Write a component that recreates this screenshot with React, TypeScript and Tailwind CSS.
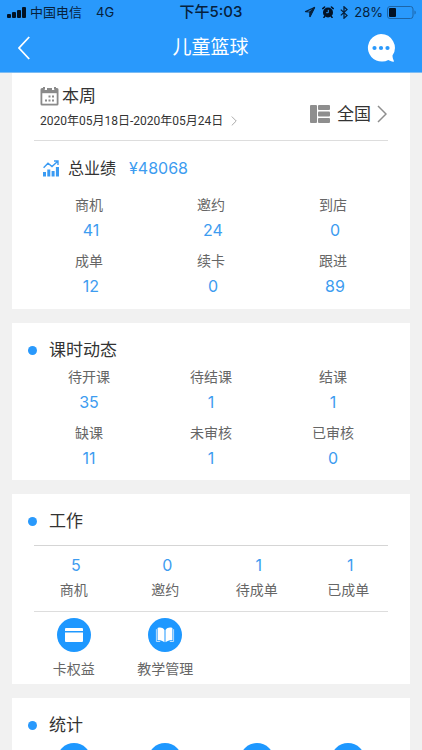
// src/App.tsx
import type { ReactNode } from "react";

type Stat = { label: string; value: number };

const performance: Stat[] = [
  { label: "商机", value: 41 },
  { label: "邀约", value: 24 },
  { label: "到店", value: 0 },
  { label: "成单", value: 12 },
  { label: "续卡", value: 0 },
  { label: "跟进", value: 89 },
];

const lessons: Stat[] = [
  { label: "待开课", value: 35 },
  { label: "待结课", value: 1 },
  { label: "结课", value: 1 },
  { label: "缺课", value: 11 },
  { label: "未审核", value: 1 },
  { label: "已审核", value: 0 },
];

const work: Stat[] = [
  { label: "商机", value: 5 },
  { label: "邀约", value: 0 },
  { label: "待成单", value: 1 },
  { label: "已成单", value: 1 },
];

function StatusBar() {
  return (
    <div className="grid grid-cols-3 items-center h-6 px-[6px] text-[13px] leading-6 text-[#06213d]">
      <div className="flex items-center gap-1">
        <svg className="ml-[1px]" width="19" height="11" viewBox="0 0 19 11" fill="#021225">
          <rect x="0" y="7" width="4" height="4" rx="1" />
          <rect x="5" y="5" width="4" height="6" rx="1" />
          <rect x="10" y="3" width="4" height="8" rx="1" />
          <rect x="15" y="0" width="4" height="11" rx="1" />
        </svg>
        <span>中国电信</span>
        <span className="ml-[10px]">4G</span>
      </div>
      <div className="text-center text-[15px] leading-6 font-medium">下午5:03</div>
      <div className="flex items-center justify-end gap-1">
        <svg width="12" height="12" viewBox="0 0 12 12" fill="none" stroke="currentColor" strokeWidth="1.2" strokeLinejoin="round">
          <path d="M10.500 1.500 1.500 5.600l4.600.4L6 10.500z" />
          <path d="M10.500 1.500 6 10.500V6z" fill="currentColor" />
        </svg>
        <svg className="ml-[2px]" width="12" height="12" viewBox="0 0 12 12">
          <circle cx="6" cy="6.500" r="5" fill="#021225" />
          <path d="M.8 2.600 2.600 1M11.200 2.600 9.400 1M2.600 10.600l-.7.8M9.400 10.600l.7.8" stroke="#021225" strokeWidth="1.500" strokeLinecap="round" />
          <path d="M6.300 3.800v2.900H4.200" fill="none" stroke="#2999fc" strokeWidth="1" />
        </svg>
        <svg className="ml-[2px]" width="8" height="13" viewBox="0 0 8 13" fill="none" stroke="currentColor" strokeWidth="1.3">
          <path d="M.8 3.600 7 9.400l-3 2.800V.8l3 2.800L.8 9.400" />
        </svg>
        <span className="ml-[2px]">28%</span>
        <svg width="29" height="13" viewBox="0 0 29 13">
          <rect x=".5" y=".5" width="25.5" height="12" rx="2.5" fill="none" stroke="#1c65a8" />
          <rect x="2" y="2" width="7" height="9" rx="1" fill="#021225" />
          <path d="M27.5 4.5c1.6.6 1.6 3.4 0 4z" fill="#1c65a8" />
        </svg>
      </div>
    </div>
  );
}

function Chevron({ className }: { className: string }) {
  return (
    <svg className={className} viewBox="0 0 10 18" fill="none" stroke="currentColor" strokeWidth="1.5">
      <path d="M1 1l8 8-8 8" />
    </svg>
  );
}

function Card({ children }: { children: ReactNode }) {
  return <section className="shrink-0 bg-white px-4">{children}</section>;
}

function SectionTitle({ children }: { children: ReactNode }) {
  return (
    <h2 className="flex items-center gap-3 pt-[15px] text-[17px] leading-6 text-[#333333]">
      <span className="size-[9px] rounded-full bg-[#2999fc]" />
      {children}
    </h2>
  );
}

function StatGrid({ stats, valueClass = "" }: { stats: Stat[]; valueClass?: string }) {
  return (
    <dl className="grid grid-cols-3 text-center">
      {stats.map((s) => (
        <div key={s.label} className="pb-[6px]">
          <dt className="text-sm leading-6 text-[#666666]">{s.label}</dt>
          <dd className={`text-base leading-[26px] text-[#3d9cf0] ${valueClass}`}>{s.value}</dd>
        </div>
      ))}
    </dl>
  );
}

function IconCircle({ children }: { children?: ReactNode }) {
  return (
    <span className="flex items-center justify-center size-[34px] rounded-full bg-[#1e98ff]">
      {children}
    </span>
  );
}

export default function App() {
  return (
    <div className="flex flex-col h-screen bg-[#f1f1f1] font-['Inter','Noto_Sans_CJK_SC',sans-serif]">
      <header className="shrink-0 bg-[#2999fc] border-b border-[#7dbcf3]">
        <StatusBar />
        <div className="grid grid-cols-[1fr_auto_1fr] items-center h-12 pl-[18px] pr-[27px] text-white">
          <button aria-label="返回" className="w-7">
            <svg width="12" height="24" viewBox="0 0 12 24" fill="none" stroke="currentColor" strokeWidth="1.8">
              <path d="M11.2 1 1 12l10.2 11" />
            </svg>
          </button>
          <h1 className="pl-2 text-[19px] leading-6">儿童篮球</h1>
          <button aria-label="消息" className="justify-self-end">
            <svg width="28" height="28" viewBox="0 0 28 28">
              <path d="M14 0a13.8 13.8 0 0 1 11.6 21.3c-.3.8.2 3.2 1.3 5.7.2.5-.1.8-.6.7-1.8-.4-3.8-1-5-1.8A13.8 13.8 0 1 1 14 0z" fill="white" />
              <circle cx="7.5" cy="14" r="2.1" fill="#2999fc" />
              <circle cx="14" cy="14" r="2.1" fill="#2999fc" />
              <circle cx="20.5" cy="14" r="2.1" fill="#2999fc" />
            </svg>
          </button>
        </div>
      </header>

      <main className="flex-1 flex flex-col gap-[14px] min-h-0 px-3 overflow-y-auto [scrollbar-width:none]">
        <Card>
          <div className="flex items-center justify-between mx-[6px] pt-[10px] pb-[7px] pl-[6px] pr-[1px] border-b border-[#dddddd]">
            <button className="text-left text-[#333333]">
              <span className="flex items-center gap-[3px] text-[17px] leading-[26px]">
                <svg width="19" height="19" viewBox="0 0 19 19">
                  <path d="M2 1h2v2h3V1h5v2h3V1h2a1.5 1.5 0 0 1 1.5 1.5V17A1.5 1.5 0 0 1 17 18.5H2A1.5 1.5 0 0 1 .5 17V2.5A1.5 1.5 0 0 1 2 1z" fill="#8a8a8a" />
                  <path d="M2.3 6.2h14.4v10.5H2.3z" fill="white" />
                  <path d="M4 0v2.8M15 0v2.8" stroke="#8a8a8a" strokeWidth="2" />
                  <path d="M8.5 8.5h2v2h-2zM12 8.5h2v2h-2zM5 12.5h2v2H5zM8.5 12.5h2v2h-2zM12 12.5h2v2h-2z" fill="#8a8a8a" />
                </svg>
                本周
              </span>
              <span className="flex items-center gap-2 font-['Roboto','Noto_Sans_CJK_SC',sans-serif] text-xs leading-6">
                2020年05月18日-2020年05月24日
                <Chevron className="w-[6px] h-[10px] text-[#999999]" />
              </span>
            </button>
            <button className="flex items-center pt-3 text-[17px] leading-6 text-[#333333]">
              <svg className="mr-[7px]" width="20" height="18" viewBox="0 0 20 18" fill="#8e8e8e">
                <rect x="0" y="0" width="7" height="18" rx="1" />
                <rect x="8" y="0" width="12" height="5" rx="1" />
                <rect x="8" y="6.5" width="12" height="5" rx="1" />
                <rect x="8" y="13" width="12" height="5" rx="1" />
              </svg>
              全国
              <Chevron className="ml-[6px] w-[10px] h-[18px] text-[#8e8e8e]" />
            </button>
          </div>
          <h2 className="flex items-center pl-[15px] pt-[15px] pb-[13px] text-base leading-6 text-[#333333]">
            <svg className="mr-[9px]" width="16" height="17" viewBox="0 0 16 17" fill="#3a9bf3">
              <path d="M0 12h3v4.500H0zM4.300 9.500h3v7h-3zM8.600 11h3v5.500h-3zM12.900 7H16v9.500h-3.100z" />
              <path d="M.6 7.8 5 3.2l4 3.4 5.8-5.4M11 1h4v4" fill="none" stroke="#3a9bf3" strokeWidth="1.4" />
            </svg>
            总业绩
            <span className="ml-[13px] text-[#3d9cf0]">¥48068</span>
          </h2>
          <div className="pb-1">
            <StatGrid stats={performance} valueClass="pl-1" />
          </div>
        </Card>

        <Card>
          <SectionTitle>课时动态</SectionTitle>
          <div className="pt-[3px] pb-[3px]">
            <StatGrid stats={lessons} />
          </div>
        </Card>

        <Card>
          <SectionTitle>工作</SectionTitle>
          <hr className="mx-[6px] mt-3 border-[#d5d5d5]" />
          <dl className="grid grid-cols-4 pt-[6px] pb-[9px] text-center">
            {work.map((s) => (
              <div key={s.label} className="flex flex-col-reverse">
                <dt className="text-sm leading-6 text-[#666666]">{s.label}</dt>
                <dd className="pl-1 text-base leading-[26px] text-[#3d9cf0]">{s.value}</dd>
              </div>
            ))}
          </dl>
          <hr className="mx-[6px] border-[#dddddd]" />
          <div className="grid grid-cols-4 pt-[6px] pb-[3px]">
            <button className="flex flex-col items-center gap-[5px] text-sm leading-6 text-[#666666]">
              <IconCircle>
                <svg width="18" height="14" viewBox="0 0 18 14" fill="white">
                  <path d="M1 0h16a1 1 0 0 1 1 1v2H0V1a1 1 0 0 1 1-1zM0 4.500h18V13a1 1 0 0 1-1 1H1a1 1 0 0 1-1-1z" />
                </svg>
              </IconCircle>
              卡权益
            </button>
            <button className="flex flex-col items-center gap-[5px] text-sm leading-6 text-[#666666]">
              <IconCircle>
                <svg width="20" height="16" viewBox="0 0 20 16" fill="white">
                  <path d="M2.600 1C5 .2 7.800.4 9.500 3v12.300C7.800 13.600 5 13 2.600 13.200zM17.400 1C15 .2 12.200.4 10.500 3v12.300c1.700-1.700 4.500-2.300 6.900-2.100z" />
                  <path d="M1.400 2.200v12.300h3.800M18.600 2.200v12.300h-3.800" fill="none" stroke="#b9defd" strokeWidth="1" />
                </svg>
              </IconCircle>
              教学管理
            </button>
          </div>
        </Card>

        <Card>
          <SectionTitle>统计</SectionTitle>
          <div className="grid grid-cols-4 justify-items-center pt-[6px] pb-8">
            <IconCircle />
            <IconCircle />
            <IconCircle />
            <IconCircle />
          </div>
        </Card>
      </main>
    </div>
  );
}
